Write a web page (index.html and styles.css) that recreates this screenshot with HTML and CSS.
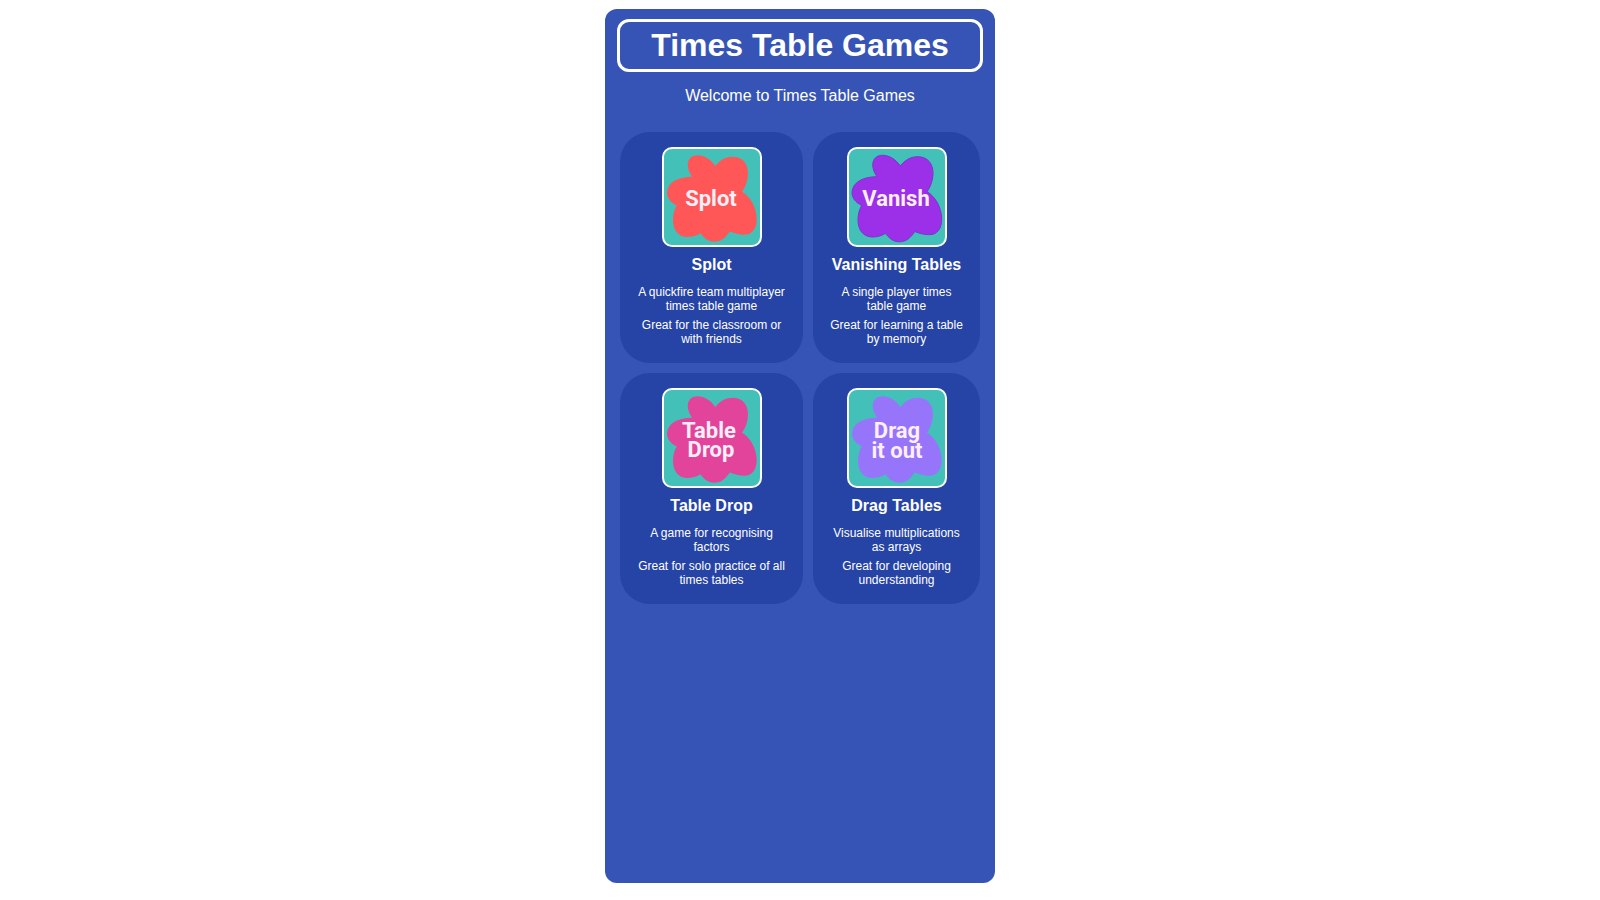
FILE: index.html
```html
<!DOCTYPE html>
<html lang="en">
<head>
    <meta charset="UTF-8">
    <meta name="viewport" content="width=device-width, initial-scale=1.0">
    <title>Times Table Games</title>
    <link rel="stylesheet" href="styles.css">
</head>
<body>
    <!-- Shared splat shape for the game icons -->
    <svg class="defs" width="0" height="0" aria-hidden="true">
        <symbol id="splat" viewBox="0 0 100 100">
            <path d="M53.3 19C57 14 63 9.7 70.5 9.7C81 9.7 86.3 17 86 27C85.7 34 83.5 40 80 44.7C88.5 49.5 94.7 61 94.7 72C94.7 82 90 87.7 82.5 87.7C77 87.7 72.5 86.5 67.8 84.5C63.5 91 59 94.8 52.3 94.8C46 94.8 42 91 38.3 86.3C34.5 89 29.5 90.2 24.5 90C15.5 89.5 11 82 11 73C11 67 12.3 62.5 14.8 58.5C8.5 55.5 5 51 5 45.3C5.5 36 15 29.7 30 29.7C27.5 26 25.7 22 25.7 17.5C26 11.5 30 8.3 35.7 8.3C42.5 8.5 49 12.5 53.3 19Z"/>
        </symbol>
    </svg>

    <main class="container">
        <h1 class="title">Times Table Games</h1>
        <p class="welcome">Welcome to Times Table Games</p>

        <div class="games">
            <div class="game">
                <a class="icon" href="#splot" aria-label="Play Splot">
                    <svg viewBox="2 2 96 96">
                        <use class="splat-red" href="#splat" width="100" height="100"/>
                        <text x="49" y="59">Splot</text>
                    </svg>
                </a>
                <h2>Splot</h2>
                <p>A quickfire team multiplayer times table game</p>
                <p>Great for the classroom or with friends</p>
            </div>

            <div class="game">
                <a class="icon" href="#vanish" aria-label="Play Vanishing Tables">
                    <svg viewBox="2 2 96 96">
                        <use class="splat-purple" href="#splat" width="100" height="100"/>
                        <text x="49" y="59">Vanish</text>
                    </svg>
                </a>
                <h2>Vanishing Tables</h2>
                <p>A single player times table game</p>
                <p>Great for learning a table by memory</p>
            </div>

            <div class="game">
                <a class="icon" href="#drop" aria-label="Play Table Drop">
                    <svg viewBox="2 2 96 96">
                        <use class="splat-pink" href="#splat" width="100" height="100"/>
                        <text><tspan x="47" y="50">Table</tspan><tspan x="49" y="69">Drop</tspan></text>
                    </svg>
                </a>
                <h2>Table Drop</h2>
                <p>A game for recognising factors</p>
                <p>Great for solo practice of all times tables</p>
            </div>

            <div class="game">
                <a class="icon" href="#drag" aria-label="Play Drag Tables">
                    <svg viewBox="2 2 96 96">
                        <use class="splat-violet" href="#splat" width="100" height="100"/>
                        <text><tspan x="50" y="50">Drag</tspan><tspan x="50" y="70">it out</tspan></text>
                    </svg>
                </a>
                <h2>Drag Tables</h2>
                <p>Visualise multiplications as arrays</p>
                <p>Great for developing understanding</p>
            </div>
        </div>
    </main>
</body>
</html>
```
FILE: styles.css
```css
* {
    box-sizing: border-box;
}
body {
    margin: 0;
    font-family: "Liberation Sans", Arial, sans-serif;
    color: white;
    background-color: white;
}
.defs {
    display: block;
}
.container {
    max-width: 390px;
    min-height: calc(100vh - 26px);
    margin: 9px auto;
    padding: 10px 12px;
    background-color: #3654b5;
    border-radius: 12px;
    text-align: center;
}
.title {
    margin: 0;
    padding: 5px;
    border: 3px solid white;
    border-radius: 12px;
    font-size: 32px;
    line-height: 37px;
}
.welcome {
    margin: 15px 0 27px;
    font-size: 16px;
    line-height: 18px;
}
.games {
    display: grid;
    grid-template-columns: 183fr 167fr;
    gap: 10px;
    padding: 0 3px;
}
.game {
    padding: 15px 15px 17px;
    background-color: #2643a6;
    border-radius: 30px;
}
.game h2 {
    margin: 9px 0 11px;
    font-size: 16px;
    line-height: 18px;
}
.game p {
    margin: 5px 0 0;
    font-size: 12px;
    line-height: 14px;
}
.icon {
    display: block;
    width: 100px;
    height: 100px;
    margin: 0 auto;
    border: 2px solid white;
    border-radius: 10px;
    background-color: #43c1b9;
    overflow: hidden;
}
.icon svg {
    display: block;
}
.icon text {
    font-family: Roboto, sans-serif;
    font-size: 22px;
    font-weight: 700;
    text-anchor: middle;
    fill: #fdeef8;
}
.splat-red {
    fill: #ff5757;
}
.splat-purple {
    fill: #9b30e8;
    stroke: #7a35c8;
}
.splat-pink {
    fill: #e2449c;
}
.splat-violet {
    fill: #9775fa;
}
```
